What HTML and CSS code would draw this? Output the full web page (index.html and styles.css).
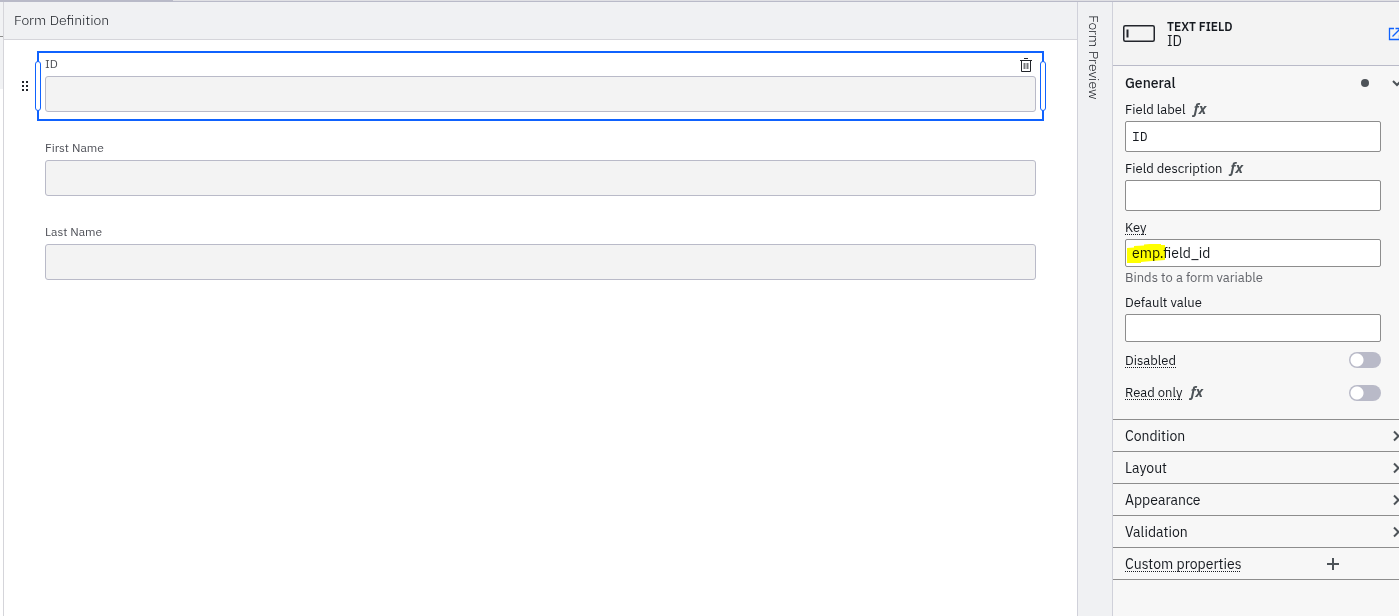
FILE: index.html
```html
<!DOCTYPE html>
<html lang="en">
<head>
<meta charset="utf-8">
<title>Form Definition</title>
<link rel="stylesheet" href="styles.css">
</head>
<body>
<div class="topline"><div class="topline-active"></div></div>
<div class="workspace">
  <div class="gutter"><div class="gutter-top"></div><div class="gutter-tab"></div></div>
  <main class="editor">
    <h1 class="editor-title">Form Definition</h1>
    <form class="canvas">
      <div class="field selected">
        <svg class="drag" viewBox="0 0 6 10" aria-hidden="true"><path d="M0 0h2v2H0zM4 0h2v2H4zM0 4h2v2H0zM4 4h2v2H4zM0 8h2v2H0zM4 8h2v2H4z" fill="#22252b"/></svg>
        <span class="handle handle-left"></span>
        <span class="handle handle-right"></span>
        <button class="trash" type="button" aria-label="Remove field"><svg viewBox="0 0 12 14"><path d="M4 .5h4M0 2.500h12M1.500 2.500v11h9v-11" fill="none" stroke="#22252b"/><path d="M4.500 5v6M7.500 5v6" fill="none" stroke="#77797d" stroke-width="2"/></svg></button>
        <label for="f-id">ID</label>
        <input id="f-id" type="text" readonly>
      </div>
      <div class="field">
        <label for="f-first">First Name</label>
        <input id="f-first" type="text" readonly>
      </div>
      <div class="field">
        <label for="f-last">Last Name</label>
        <input id="f-last" type="text" readonly>
      </div>
    </form>
  </main>
  <button class="preview" type="button"><span>Form Preview</span></button>
  <aside class="panel">
    <div class="panel-body">
      <header class="panel-header">
        <svg class="type-icon" viewBox="0 0 32 17" aria-hidden="true"><rect x=".75" y=".75" width="30.500" height="15.500" rx="1.500" fill="none" stroke="#22252b" stroke-width="1.500"/><path d="M4.500 4.500v8" stroke="#22252b" stroke-width="2"/></svg>
        <div class="panel-names"><div class="type">TEXT FIELD</div><div class="name">ID</div></div>
        <a class="docs" href="#" aria-label="Open documentation"><svg viewBox="0 0 14 14"><path d="M6 1.500H1.500v11h10V8M7.500 1.500h5v5M12.500 1.500L4.500 9.500" fill="none" stroke="#0f62fe" stroke-width="1.300"/></svg></a>
      </header>
      <section class="general">
        <div class="general-head">
          <h2>General</h2><span class="dot"></span>
          <button class="icon-button" type="button" aria-label="Collapse General"><svg viewBox="0 0 16 16"><path d="M4 6l4 4 4-4" fill="none" stroke="#4d5358" stroke-width="2"/></svg></button>
        </div>
        <div class="entry">
          <div class="entry-label"><label for="p-label">Field label</label><button class="fx" type="button">fx</button></div>
          <input class="tall code" id="p-label" type="text" value="ID">
        </div>
        <div class="entry">
          <div class="entry-label"><label for="p-desc">Field description</label><button class="fx" type="button">fx</button></div>
          <input class="tall" id="p-desc" type="text">
        </div>
        <div class="entry key">
          <div class="entry-label"><label class="hint" for="p-key">Key</label></div>
          <div class="key-box">
            <input id="p-key" type="text" value="emp.field_id">
            <svg class="marker" viewBox="0 0 40 20" aria-hidden="true"><path d="M0 4L7 3.500V2L17 1.500V.5L23 0h11v1h4v15l-13 1-11 1v1H0z" fill="#ff0"/></svg>
          </div>
          <p class="description">Binds to a form variable</p>
        </div>
        <div class="entry">
          <div class="entry-label"><label for="p-default">Default value</label></div>
          <input id="p-default" type="text">
        </div>
        <div class="toggle-row"><label class="hint" for="p-disabled">Disabled</label><input class="toggle" id="p-disabled" type="checkbox"></div>
        <div class="toggle-row readonly-row"><label class="hint" for="p-readonly">Read only</label><button class="fx" type="button">fx</button><input class="toggle" id="p-readonly" type="checkbox"></div>
      </section>
      <button class="group" type="button"><span>Condition</span><svg viewBox="0 0 16 16"><path d="M5 3.500L9.500 8 5 12.500" fill="none" stroke="#4d5358" stroke-width="2"/></svg></button>
      <button class="group" type="button"><span>Layout</span><svg viewBox="0 0 16 16"><path d="M5 3.500L9.500 8 5 12.500" fill="none" stroke="#4d5358" stroke-width="2"/></svg></button>
      <button class="group" type="button"><span>Appearance</span><svg viewBox="0 0 16 16"><path d="M5 3.500L9.500 8 5 12.500" fill="none" stroke="#4d5358" stroke-width="2"/></svg></button>
      <button class="group" type="button"><span>Validation</span><svg viewBox="0 0 16 16"><path d="M5 3.500L9.500 8 5 12.500" fill="none" stroke="#4d5358" stroke-width="2"/></svg></button>
      <div class="group custom"><span class="hint">Custom properties</span><button class="icon-button" type="button" aria-label="Add property"><svg viewBox="0 0 16 16"><path d="M8 2v12M2 8h12" stroke="#4d5358" stroke-width="2"/></svg></button></div>
    </div>
  </aside>
</div>
</body>
</html>
```
FILE: styles.css
```css
* { box-sizing: border-box; }
body {
  margin: 0;
  height: 100vh;
  display: flex;
  flex-direction: column;
  overflow: hidden;
  background: #fff;
  color: #161a20;
  font-family: "IBM Plex Sans", Roboto, sans-serif;
  font-size: 14px;
}
button { padding: 0; border: 0; background: none; color: inherit; font: inherit; }
h1, h2, p { margin: 0; }
svg { display: block; }

.topline { flex: none; height: 2px; background: #e0e0e4; border-bottom: 1px solid #b9bac8; }
.topline-active { width: 173px; height: 1px; background: #b9bac8; }
.workspace { flex: 1; min-height: 0; display: flex; }

.gutter { width: 4px; border-right: 1px solid #d5d5da; }
.gutter-top { height: 35px; background: #f1f2f4; border-bottom: 1px solid #8d8d8d; }
.gutter-tab { height: 52px; background: #f1f2f4; }

.editor { flex: 1; min-width: 0; }
.editor-title {
  height: 38px;
  padding-left: 10px;
  background: #f0f1f3;
  border-bottom: 1px solid #d5d5da;
  font-size: 14px;
  font-weight: 300;
  line-height: 36px;
}
.canvas { display: grid; gap: 14px; padding: 11px 33px; }
.field {
  position: relative;
  display: grid;
  gap: 4px;
  padding: 3px 6px 7px;
  border: 2px solid transparent;
}
.field label { justify-self: start; font-size: 12px; line-height: 16px; color: #4d4f56; }
.field input {
  width: 100%;
  height: 36px;
  border: 1px solid #b9bac8;
  border-radius: 3px;
  background: #f3f3f3;
}
.selected { border-color: #0f62fe; }
.drag { position: absolute; left: -17px; top: 28px; width: 6px; height: 10px; }
.handle {
  position: absolute;
  top: 8px;
  bottom: 8px;
  width: 6px;
  border: 1px solid #0f62fe;
  border-radius: 3px;
  background: #fff;
}
.handle-left { left: -4px; }
.handle-right { right: -4px; }
.trash { position: absolute; top: 5px; right: 10px; width: 12px; height: 14px; }

.preview {
  width: 36px;
  display: flex;
  justify-content: center;
  align-items: flex-start;
  padding: 13px 2px 0 0;
  background: #f0f1f3;
  border: solid #d0d1da;
  border-width: 0 1px;
}
.preview span { writing-mode: vertical-rl; font-weight: 300; line-height: 18px; }

.panel { width: 286px; overflow: hidden; background: #f7f7f7; }
.panel-body { width: 300px; }
.panel-header {
  display: flex;
  align-items: center;
  gap: 12px;
  height: 64px;
  padding: 0 11px 0 10px;
  background: #f3f3f3;
  border-bottom: 1px solid #b9bac8;
}
.type-icon { width: 32px; height: 17px; }
.panel-names { flex: 1; line-height: 14px; }
.type { font-size: 12px; font-weight: 600; }
.docs svg { width: 14px; height: 14px; }

.general { padding: 0 32px 18px 12px; border-bottom: 1px solid #8d8d8d; }
.general-head { display: flex; align-items: center; height: 33px; margin: 0 -24px 2px 0; }
.general-head h2 { flex: 1; font-size: 14px; font-weight: 500; }
.dot { width: 8px; height: 8px; margin-right: 20px; border-radius: 50%; background: #4d5358; }
.icon-button, .icon-button svg { width: 16px; height: 16px; }
.entry { margin-bottom: 8px; }
.entry-label { display: flex; gap: 8px; height: 20px; font-size: 13px; line-height: 18px; }
.entry input {
  display: block;
  width: 100%;
  height: 28px;
  padding: 0 6px;
  border: 1px solid #8d8d8d;
  border-radius: 2px;
  background: #fff;
  color: inherit;
  font: inherit;
}
.entry input.tall { height: 31px; }
.entry input.code { font-family: "IBM Plex Mono", "DejaVu Sans Mono", monospace; font-size: 13px; }
.key { margin-bottom: 7px; }
.key-box { position: relative; }
.marker { position: absolute; left: 2px; top: 5px; width: 40px; height: 20px; mix-blend-mode: multiply; }
.description { padding-top: 2px; font-size: 13px; line-height: 18px; color: #62646a; }
.fx { height: 16px; color: #4d5358; font-family: "Open Sans", sans-serif; font-size: 14px; font-style: italic; font-weight: 700; line-height: 16px; }
.hint { text-decoration: underline dotted 1px; text-underline-offset: 2px; text-decoration-skip-ink: none; }
.toggle-row { display: flex; align-items: center; gap: 8px; height: 16px; margin-top: 10px; font-size: 13px; }
.readonly-row { margin-top: 17px; }
.readonly-row label, .readonly-row .fx { margin-bottom: 2px; }
.toggle {
  appearance: none;
  width: 32px;
  height: 16px;
  margin: 0 0 0 auto;
  border-radius: 8px;
  background: radial-gradient(circle at 8px 8px, #fff 6px, #b9bac8 7px);
}
.group {
  display: flex;
  justify-content: space-between;
  align-items: center;
  width: 100%;
  height: 32px;
  padding: 0 8px 0 12px;
  border-bottom: 1px solid #8d8d8d;
}
.group svg { width: 16px; height: 16px; }
.custom { padding-right: 72px; }
```
